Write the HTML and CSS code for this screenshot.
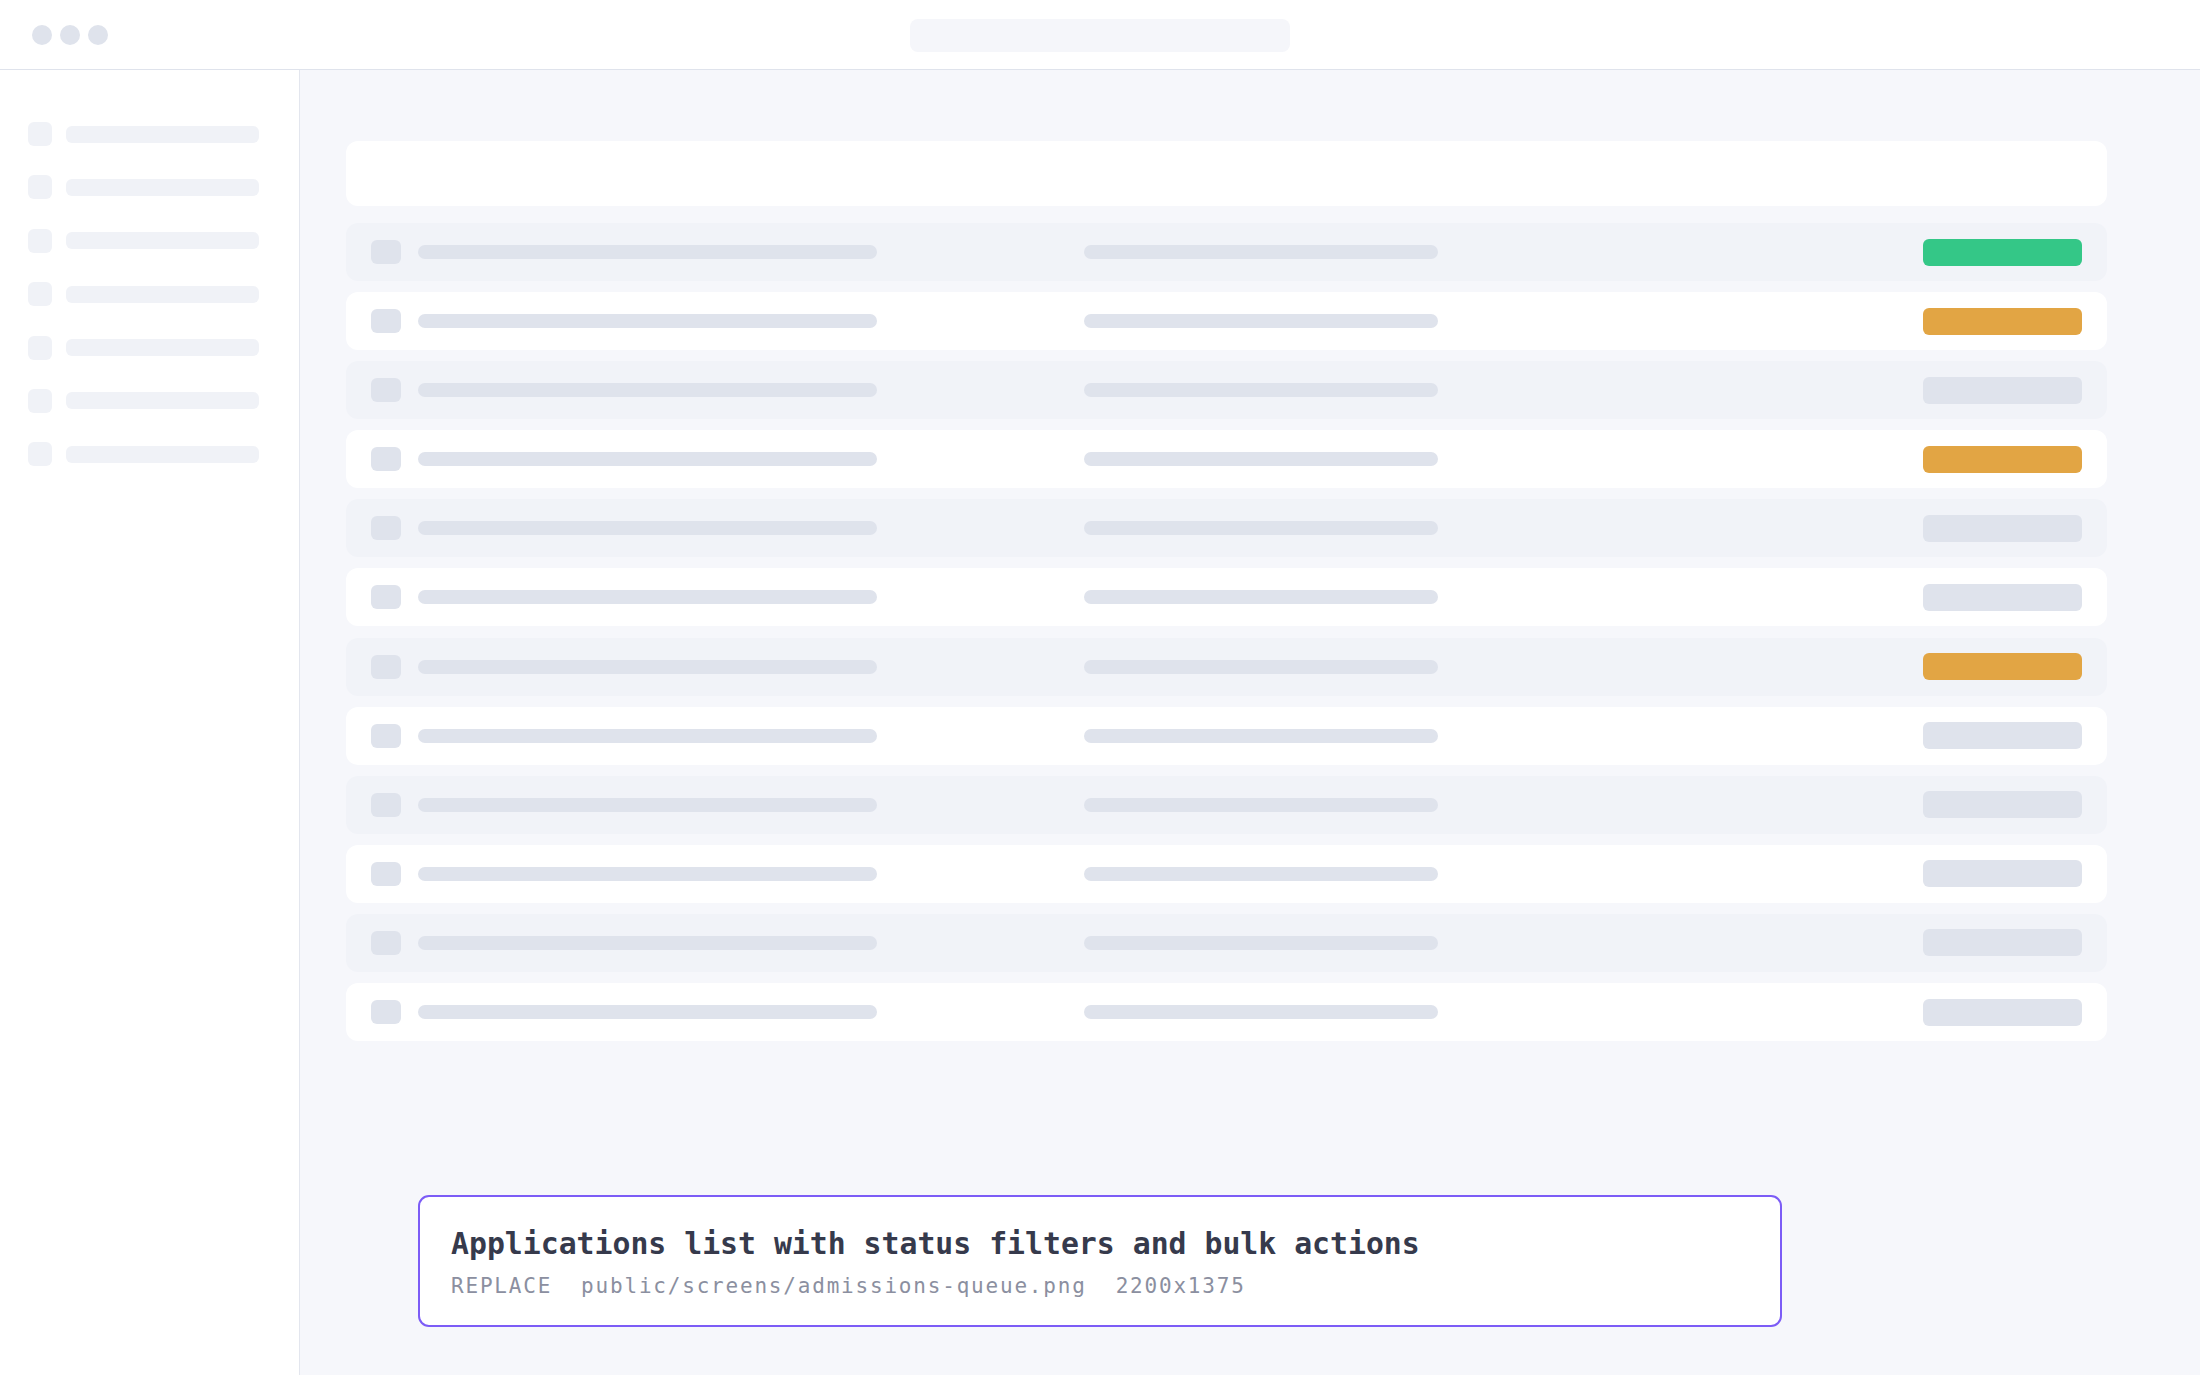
FILE: index.html
```html
<!DOCTYPE html>
<html lang="en">
<head>
<meta charset="utf-8">
<title>Admissions queue</title>
<link rel="stylesheet" href="styles.css">
</head>
<body>
<div class="app">
  <header class="topbar">
    <div class="dots"><span class="dot"></span><span class="dot"></span><span class="dot"></span></div>
    <div class="search"></div>
  </header>
  <div class="body">
    <aside class="sidebar">
      <div class="nav-item"><span class="nav-icon"></span><span class="nav-bar"></span></div>
      <div class="nav-item"><span class="nav-icon"></span><span class="nav-bar"></span></div>
      <div class="nav-item"><span class="nav-icon"></span><span class="nav-bar"></span></div>
      <div class="nav-item"><span class="nav-icon"></span><span class="nav-bar"></span></div>
      <div class="nav-item"><span class="nav-icon"></span><span class="nav-bar"></span></div>
      <div class="nav-item"><span class="nav-icon"></span><span class="nav-bar"></span></div>
      <div class="nav-item"><span class="nav-icon"></span><span class="nav-bar"></span></div>
    </aside>
    <main class="main">
      <div class="content">
        <div class="filters"></div>
        <div class="list">
          <div class="row alt"><span class="check"></span><span class="bar name"></span><span class="bar meta"></span><span class="status green"></span></div>
          <div class="row"><span class="check"></span><span class="bar name"></span><span class="bar meta"></span><span class="status orange"></span></div>
          <div class="row alt"><span class="check"></span><span class="bar name"></span><span class="bar meta"></span><span class="status"></span></div>
          <div class="row"><span class="check"></span><span class="bar name"></span><span class="bar meta"></span><span class="status orange"></span></div>
          <div class="row alt"><span class="check"></span><span class="bar name"></span><span class="bar meta"></span><span class="status"></span></div>
          <div class="row"><span class="check"></span><span class="bar name"></span><span class="bar meta"></span><span class="status"></span></div>
          <div class="row alt"><span class="check"></span><span class="bar name"></span><span class="bar meta"></span><span class="status orange"></span></div>
          <div class="row"><span class="check"></span><span class="bar name"></span><span class="bar meta"></span><span class="status"></span></div>
          <div class="row alt"><span class="check"></span><span class="bar name"></span><span class="bar meta"></span><span class="status"></span></div>
          <div class="row"><span class="check"></span><span class="bar name"></span><span class="bar meta"></span><span class="status"></span></div>
          <div class="row alt"><span class="check"></span><span class="bar name"></span><span class="bar meta"></span><span class="status"></span></div>
          <div class="row"><span class="check"></span><span class="bar name"></span><span class="bar meta"></span><span class="status"></span></div>
        </div>
      </div>
    </main>
  </div>
  <div class="caption">
    <div class="caption-title">Applications list with status filters and bulk actions</div>
    <div class="caption-sub"><span>REPLACE</span><span>public/screens/admissions-queue.png</span><span>2200x1375</span></div>
  </div>
</div>
</body>
</html>
```

FILE: styles.css
```css
* { box-sizing: border-box; }
html, body { margin: 0; padding: 0; }
body {
  width: 2200px;
  height: 1375px;
  overflow: hidden;
  background: #f6f7fb;
  font-family: "DejaVu Sans Mono", "Liberation Mono", monospace;
}
.app {
  display: flex;
  flex-direction: column;
  height: 1375px;
}
.topbar {
  position: relative;
  height: 70px;
  flex: none;
  background: #ffffff;
  border-bottom: 1px solid #dfe3ec;
  display: flex;
  align-items: center;
  justify-content: center;
}
.dots {
  position: absolute;
  left: 32px;
  top: 25px;
  display: flex;
  gap: 8px;
}
.dot {
  width: 20px;
  height: 20px;
  border-radius: 50%;
  background: #dfe3ec;
}
.search {
  width: 380px;
  height: 33px;
  border-radius: 8px;
  background: #f5f6fa;
  margin-top: 1px;
}
.body {
  flex: 1;
  display: flex;
  min-height: 0;
}
.sidebar {
  width: 300px;
  flex: none;
  background: #ffffff;
  border-right: 1px solid #e3e6ee;
  padding: 52px 0 0 28px;
  display: flex;
  flex-direction: column;
  gap: 29.4px;
}
.nav-item {
  display: flex;
  align-items: center;
  gap: 14px;
  height: 24px;
}
.nav-icon {
  width: 24px;
  height: 24px;
  border-radius: 6px;
  background: #f0f2f7;
}
.nav-bar {
  width: 193px;
  height: 17px;
  border-radius: 6px;
  background: #f0f2f7;
}
.main {
  flex: 1;
  padding: 71px 0 0 46px;
}
.content {
  width: 1761px;
}
.filters {
  height: 65px;
  background: #ffffff;
  border-radius: 12px;
  margin-bottom: 17px;
}
.list {
  display: flex;
  flex-direction: column;
  gap: 11.1px;
}
.row {
  height: 58px;
  border-radius: 12px;
  background: #ffffff;
  display: flex;
  align-items: center;
  padding: 0 25px;
}
.row.alt { background: #f1f3f8; }
.check {
  width: 30px;
  height: 24px;
  border-radius: 6px;
  background: #dfe3ec;
  margin-right: 17px;
}
.bar {
  height: 14px;
  border-radius: 7px;
  background: #dfe3ec;
}
.bar.name { width: 459px; }
.bar.meta { width: 354px; margin-left: 207px; }
.status {
  margin-left: auto;
  width: 159px;
  height: 27px;
  border-radius: 6px;
  background: #dfe3ec;
}
.status.green { background: #34c787; }
.status.orange { background: #e2a544; }
.caption {
  position: fixed;
  left: 50%;
  bottom: 48px;
  transform: translateX(-50%);
  width: 1364px;
  height: 132px;
  background: #ffffff;
  border: 2px solid #7c5cf6;
  border-radius: 11px;
  padding: 29px 31px 0;
}
.caption-title {
  font-size: 29.8px;
  line-height: 36px;
  font-weight: bold;
  color: #363a4c;
  white-space: nowrap;
}
.caption-sub {
  margin-top: 12px;
  font-size: 21px;
  line-height: 24px;
  letter-spacing: 1.8px;
  color: #8b8fa0;
  display: flex;
  gap: 29px;
  white-space: nowrap;
}
```
